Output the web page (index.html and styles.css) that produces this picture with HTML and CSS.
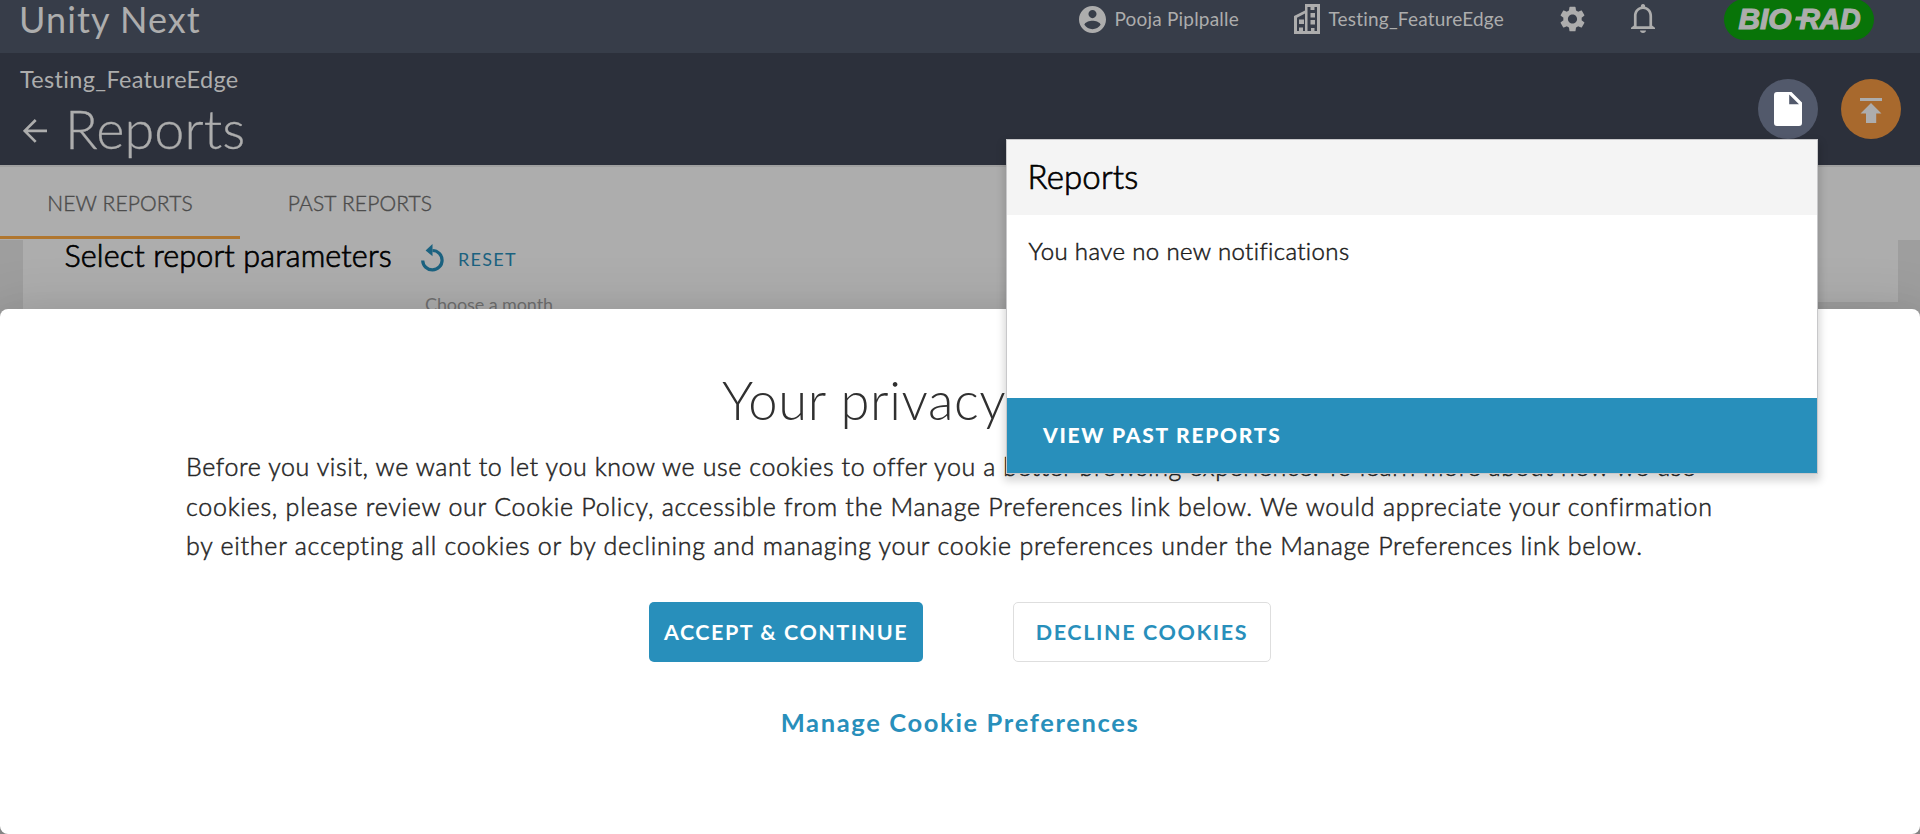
FILE: index.html
```html
<!DOCTYPE html>
<html lang="en">
<head>
<meta charset="utf-8">
<title>Unity Next - Reports</title>
<link rel="stylesheet" href="styles.css">
</head>
<body>
<header class="topbar">
  <div class="brand">Unity Next</div>
  <div class="account">
    <svg class="icon-user" viewBox="2 2 20 20"><path fill-rule="evenodd" d="M12 2C6.48 2 2 6.48 2 12s4.48 10 10 10 10-4.48 10-10S17.52 2 12 2zm0 3c1.66 0 3 1.34 3 3s-1.34 3-3 3-3-1.34-3-3 1.34-3 3-3zm0 14.2c-2.5 0-4.71-1.28-6-3.22.03-1.99 4-3.08 6-3.08 1.99 0 5.97 1.09 6 3.08-1.29 1.94-3.5 3.22-6 3.22z"/></svg>
    <span>Pooja Piplpalle</span>
  </div>
  <div class="account lab">
    <svg class="icon-building" viewBox="0 0 26 30"><path fill-rule="evenodd" d="M11 0H26V30H0V12L11 6.500zM13.500 3V27H17V24H20.500V27H23V3H20.500V6H16.500V3zM3 13.800V27H5V23.500H9V27H11V9.600z"/><path d="M5 15.500h5v4.500H5zM16.500 9h4.500v4.500h-4.500zM16.500 16h4.500v4.500h-4.500z"/></svg>
    <span>Testing_FeatureEdge</span>
  </div>
  <svg class="icon-gear" viewBox="2.200 2 19.600 20"><path d="M19.140 12.940c.04-.3.06-.61.06-.94 0-.32-.02-.64-.07-.94l2.030-1.580c.18-.14.23-.41.12-.61l-1.920-3.320c-.12-.22-.37-.29-.59-.22l-2.390.96c-.5-.38-1.030-.7-1.620-.94l-.36-2.540c-.04-.24-.24-.41-.48-.41h-3.840c-.24 0-.43.17-.47.41l-.36 2.540c-.59.24-1.130.57-1.620.94l-2.390-.96c-.22-.08-.47 0-.59.22L2.740 8.870c-.12.21-.08.47.12.61l2.030 1.580c-.05.3-.09.63-.09.94s.02.64.07.94l-2.030 1.580c-.18.14-.23.41-.12.61l1.920 3.320c.12.22.37.29.59.22l2.390-.96c.5.38 1.030.7 1.620.94l.36 2.540c.05.24.24.41.48.41h3.840c.24 0 .44-.17.47-.41l.36-2.540c.59-.24 1.130-.56 1.620-.94l2.390.96c.22.08.47 0 .59-.22l1.920-3.320c.12-.22.07-.47-.12-.61l-2.010-1.580zM12 15.600c-1.980 0-3.600-1.620-3.600-3.600s1.620-3.600 3.600-3.600 3.600 1.620 3.600 3.600-1.620 3.600-3.600 3.600z"/></svg>
  <svg class="icon-bell" viewBox="0 0 24 29"><path fill-rule="evenodd" d="M12 0c1.500 0 2.200 1 2.200 2.700 4.200 1 6.900 4.600 6.900 9.300v9.500L24 23.700V25H0v-1.300l2.900-2.200V12c0-4.700 2.700-8.300 6.900-9.300C9.800 1 10.500 0 12 0zM12 5c-3.800 0-6.400 3-6.400 7v10.200h12.800V12c0-4-2.600-7-6.400-7zM9 26.500h6c0 1.500-1.300 2.500-3 2.500s-3-1-3-2.500z"/></svg>
  <svg class="logo" viewBox="0 0 150 41"><rect width="150" height="41" rx="20.500" fill="#087408"/><g class="logo-text"><text x="14.500" y="29.700" textLength="53" lengthAdjust="spacingAndGlyphs">BIO</text><text x="75.500" y="29.700" textLength="61" lengthAdjust="spacingAndGlyphs">RAD</text></g><path d="M72 17.500h14l-1 4H71z" fill="#adadad"/></svg>
</header>

<section class="pagehead">
  <div class="titles">
    <div class="crumb">Testing_FeatureEdge</div>
    <div class="titlerow">
      <svg class="icon-back" viewBox="0 0 24 24"><path d="M24 11.900H2M12.700 1L1.700 11.900l11 11" fill="none" stroke="#adadad" stroke-width="2.700"/></svg>
      <h1>Reports</h1>
    </div>
  </div>
  <div class="round doc"><svg class="icon-doc" viewBox="0 0 28 34"><path fill-rule="evenodd" d="M3 0H17.500L28 10.500V31q0 3-3 3H3q-3 0-3-3V3q0-3 3-3zM15.200 2.500V12.300H25z"/></svg></div>
  <div class="round upload"><svg class="icon-upload" viewBox="0 0 22 25"><path d="M0 0h22v3H0zM11 5l10.500 10.500h-5.300V25H6v-9.500H.5z"/></svg></div>
</section>

<nav class="tabs"><div class="tab active">NEW REPORTS</div><div class="tab">PAST REPORTS</div></nav>

<main class="content">
  <div class="panel">
    <div class="paramrow">
      <h2>Select report parameters</h2>
      <svg class="icon-reset" viewBox="0 0 23 28"><path d="M11.500 0v12.200L4.600 6.400z"/><path d="M11.500 6.500a9.700 9.700 0 1 1-9.800 10" fill="none" stroke="#1b6280" stroke-width="3.200"/></svg>
      <span class="reset">RESET</span>
    </div>
    <div class="month">Choose a month</div>
  </div>
  <div class="panel side"></div>
</main>

<section class="cookies">
  <h2>Your privacy</h2>
  <p><span class="lead">Before you visit, we want to let you know we use cookies to offer you a better browsing experience. To learn more about how we use</span><br>cookies, please review our Cookie Policy, accessible from the Manage Preferences link below. We would appreciate your confirmation<br>by either accepting all cookies or by declining and managing your cookie preferences under the Manage Preferences link below.</p>
  <div class="actions">
    <button class="btn accept">ACCEPT &amp; CONTINUE</button>
    <button class="btn decline">DECLINE COOKIES</button>
  </div>
  <a class="manage">Manage Cookie Preferences</a>
</section>

<aside class="popup">
  <h3>Reports</h3>
  <div class="message">You have no new notifications</div>
  <div class="past">VIEW PAST REPORTS</div>
</aside>
</body>
</html>
```
FILE: styles.css
```css
* { box-sizing: border-box; }
body {
  margin: 0;
  height: 834px;
  overflow: hidden;
  position: relative;
  background: #9e9e9e;
  font-family: Lato, "Liberation Sans", sans-serif;
}
h1, h2, h3, p { margin: 0; font-weight: 400; }
svg { display: block; flex: none; }
span, h1, h2, a, button { white-space: nowrap; }

.topbar {
  height: 53px;
  padding: 0 46px 0 19px;
  display: flex;
  align-items: flex-start;
  background: #373d49;
  color: #adadad;
  fill: #adadad;
}
.brand { width: 1059.500px; font-size: 36px; line-height: 38px; letter-spacing: 1.080px; }
.account { width: 215px; display: flex; align-items: center; gap: 9px; height: 38px; font-size: 19px; letter-spacing: 0.200px; }
.account span { padding-bottom: 2px; }
.account.lab { width: 266px; }
.icon-user { width: 27px; height: 27px; }
.icon-building { width: 26px; height: 30px; }
.icon-gear { width: 25px; height: 26px; margin: 6px 46px 0 0; }
.icon-bell { width: 24px; height: 29px; margin: 4px 69.500px 0 0; }
.logo { width: 150px; height: 41px; margin-top: -1px; }
.logo-text {
  font: italic 700 29px "Liberation Sans", sans-serif;
  fill: #adadad;
  stroke: #adadad;
  stroke-width: 1.200px;
}

.pagehead {
  height: 112px;
  padding: 12px 19px 0 20px;
  display: flex;
  background: #2c303b;
  color: #adadad;
}
.titles { flex: 1; }
.crumb { font-size: 23.500px; line-height: 29px; letter-spacing: 0.330px; }
.titlerow { display: flex; align-items: center; margin-top: 3px; padding-left: 3px; gap: 18px; }
.icon-back { width: 24px; height: 24px; margin-top: 4px; }
.pagehead h1 { font-size: 54px; line-height: 64px; font-weight: 300; letter-spacing: 0.100px; -webkit-text-stroke: 0.300px #adadad; }
.round {
  width: 60px;
  height: 60px;
  margin: 14px 0 0 23px;
  border-radius: 50%;
  display: flex;
  align-items: center;
  justify-content: center;
}
.doc { background: #52596b; fill: #fff; }
.upload { background: #a8692d; fill: #adadad; }
.icon-doc { width: 28px; height: 34px; }
.icon-upload { width: 22px; height: 25px; margin-top: 3px; }

.tabs { height: 75px; display: flex; background: #adadad; border-top: 2px solid #a0a0a0; }
.tab {
  width: 240px;
  height: 72px;
  text-align: center;
  font-size: 21px;
  font-weight: 300;
  line-height: 71px;
  letter-spacing: 0.170px;
  color: #4c4c4c;
  -webkit-text-stroke: 0.400px #4c4c4c;
}
.tab.active { border-bottom: 3px solid #b0762f; }

.content { display: flex; height: 594px; padding: 0 22px 0 23px; background: #9e9e9e; }
.panel { width: 1400px; height: 300px; background: #adadad; }
.panel.side { flex: 1; height: 62px; }
.paramrow { display: flex; align-items: flex-start; padding-left: 41.500px; height: 56px; }
.paramrow h2 { width: 356.500px; font-size: 30.500px; line-height: 30px; font-weight: 300; letter-spacing: 0.130px; color: #000; -webkit-text-stroke: 0.700px #000; }
.icon-reset { width: 23px; height: 28px; margin-top: 4px; fill: #1b6280; }
.reset { margin-left: 14px; padding-top: 5px; font-size: 18px; line-height: 28px; letter-spacing: 1.300px; color: #1b6280; }
.month { padding-left: 402px; font-size: 18px; line-height: 17px; letter-spacing: -0.100px; color: #6f6f6f; }

/* Dialog anchored to the bottom, above the page */
.cookies {
  position: absolute;
  inset: 309px 0 0;
  border-radius: 8px;
  padding: 59px 186px 0;
  background: #fff;
  color: #262626;
  text-align: center;
  box-shadow: 0 11px 58px 10px rgba(0,0,0,.12), 0 30px 48px 4px rgba(0,0,0,.14), 0 14px 19px -9px rgba(0,0,0,.2);
}
.cookies h2 { width: 283px; margin-left: 536px; text-align: left; font-size: 52.500px; line-height: 64px; font-weight: 300; letter-spacing: 0.600px; color: #303030; }
.cookies p { margin-top: 15px; text-align: left; white-space: nowrap; font-size: 25px; line-height: 39.500px; font-weight: 300; letter-spacing: 0.750px; -webkit-text-stroke: 0.500px #262626; }
.lead { letter-spacing: 0.610px; }
.actions { display: flex; justify-content: center; gap: 90px; margin-top: 36px; }
.btn { height: 60px; padding: 0; border: 0; border-radius: 5px; font: 700 21.500px/60px Lato, sans-serif; letter-spacing: 1.500px; color: #fff; background: #288fbb; }
.accept { width: 274px; }
.decline { width: 258px; background: #fff; color: #288fbb; border: 1px solid #dedede; line-height: 58px; letter-spacing: 1.620px; }
.manage { display: block; margin-top: 40px; font-size: 25.500px; line-height: 40px; font-weight: 700; letter-spacing: 1.650px; color: #288fbb; }

/* Notification menu opened from the document button */
.popup {
  position: absolute;
  left: 1006px;
  top: 139px;
  width: 812px;
  height: 335px;
  border: 1px solid #c8c8ca;
  background: #fff;
  box-shadow: 0 5px 8px 2px rgba(0,0,0,.16);
}
.popup h3 { height: 75px; padding-left: 20.500px; font-size: 33px; line-height: 73px; font-weight: 300; letter-spacing: 0.150px; background: #f4f4f4; color: #000; -webkit-text-stroke: 0.700px #000; }
.message { height: 183px; padding: 18px 21.500px; font-size: 24px; line-height: 36px; font-weight: 300; letter-spacing: 0.380px; color: #1a1a1a; -webkit-text-stroke: 0.500px #1a1a1a; }
.past { height: 75px; padding-left: 36px; font-size: 21px; line-height: 73px; font-weight: 900; letter-spacing: 1.730px; background: #288fbb; color: #fff; }
```
